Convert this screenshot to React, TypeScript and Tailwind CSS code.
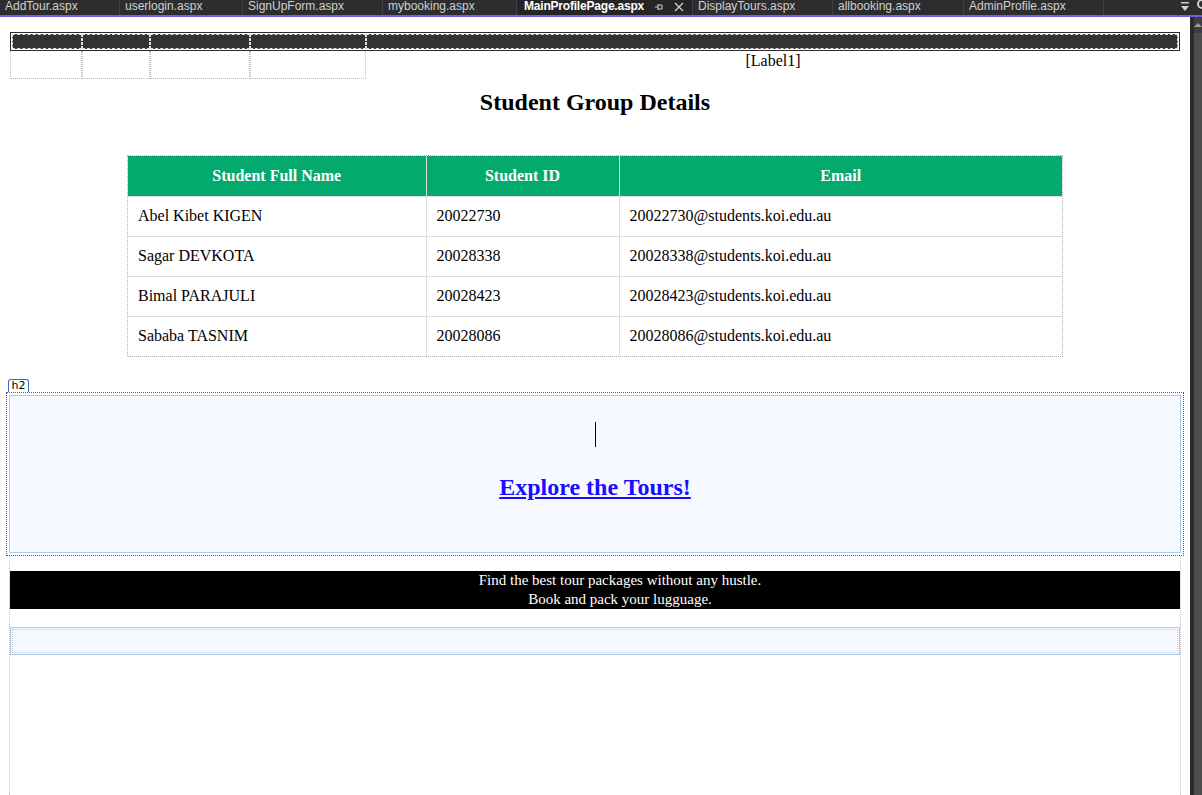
import React from "react";

const tabs = [
  { name: "AddTour.aspx", w: 120 },
  { name: "userlogin.aspx", w: 123 },
  { name: "SignUpForm.aspx", w: 140 },
  { name: "mybooking.aspx", w: 134 },
];
const tabs2 = [
  { name: "DisplayTours.aspx", w: 140 },
  { name: "allbooking.aspx", w: 131 },
  { name: "AdminProfile.aspx", w: 140 },
];

const rows = [
  ["Abel Kibet KIGEN", "20022730", "20022730@students.koi.edu.au"],
  ["Sagar DEVKOTA", "20028338", "20028338@students.koi.edu.au"],
  ["Bimal PARAJULI", "20028423", "20028423@students.koi.edu.au"],
  ["Sababa TASNIM", "20028086", "20028086@students.koi.edu.au"],
];

const navW = [72, 68, 100, 116];

export default function App() {
  return (
    <div className="w-[1202px] h-[795px] overflow-hidden flex flex-col bg-white">
      {/* tab bar */}
      <div className="h-[15px] bg-[#2d2d30] flex items-stretch text-[12px] leading-[14px] text-[#d0d0d0] overflow-hidden" style={{ fontFamily: '"Liberation Sans", Arial, sans-serif' }}>
        {tabs.map((t) => (
          <div key={t.name} className="shrink-0 border-r border-[#3f3f46] pl-[5px] -mt-[1px]" style={{ width: t.w }}>
            {t.name}
          </div>
        ))}
        <div className="shrink-0 w-[176px] border-r border-[#3f3f46] pl-[7px] -mt-[1px] flex items-start bg-[#252526]">
          <span className="font-bold text-white w-[130px] tracking-[-0.2px]">MainProfilePage.aspx</span>
          <svg width="10" height="10" viewBox="0 0 10 10" className="mt-[3px]">
            <path d="M1 5 H4 M4 2 V8 M4 3 H8 M4 7 H8 M8 3 V7" stroke="#cfcfcf" strokeWidth="1" fill="none" />
          </svg>
          <svg width="10" height="10" viewBox="0 0 10 10" className="mt-[3px] ml-[10px]">
            <path d="M1 1 L9 9 M9 1 L1 9" stroke="#cfcfcf" strokeWidth="1.3" />
          </svg>
        </div>
        {tabs2.map((t) => (
          <div key={t.name} className="shrink-0 border-r border-[#3f3f46] pl-[5px] -mt-[1px]" style={{ width: t.w }}>
            {t.name}
          </div>
        ))}
        <div className="flex-1 flex justify-end items-start gap-[6px]">
          <svg width="10" height="12" viewBox="0 0 10 12" className="mt-[1px]">
            <rect x="1" y="1" width="8" height="1.5" fill="#d0d0d0" />
            <path d="M1 5 L9 5 L5 10 Z" fill="#d0d0d0" />
          </svg>
          <svg width="6" height="12" viewBox="0 0 6 12">
            <circle cx="6" cy="4" r="4" fill="none" stroke="#d0d0d0" strokeWidth="2" />
          </svg>
        </div>
      </div>
      <div className="h-[2px] bg-[#7160e8]" />

      <div className="flex-1 flex min-h-0">
        {/* content */}
        <div className="w-[1190px] flex flex-col bg-white" style={{ fontFamily: '"Liberation Serif", "Times New Roman", serif' }}>
          {/* nav table */}
          <div className="mt-[15px] mx-[10px]">
            <div className="border border-[#2b2b2b] p-px flex h-[19px] bg-white">
              {navW.map((w, i) => (
                <div key={i} className="h-full bg-[#333333] border border-dashed border-[#e0e0e0]" style={{ width: w - (i === 0 ? 2 : 0) }} />
              ))}
              <div className="flex-1 h-full bg-[#333333] border border-dashed border-[#e0e0e0]" />
            </div>
            <div className="flex h-[28px]">
              {navW.map((w, i) => (
                <div key={i} className="h-full border border-dotted border-[#bdbdbd] border-t-0" style={{ width: w }} />
              ))}
              <div className="flex-1 text-center text-[16px] leading-[18px] pt-[1px] text-black">[Label1]</div>
            </div>
          </div>

          <h2 className="mt-[9px] text-center text-[24px] leading-[28px] font-bold text-black">Student Group Details</h2>

          {/* table */}
          <div className="mt-[39px] mx-auto w-[936px] border border-dotted border-[#b0b0b0]">
            <table className="w-full border-collapse text-[16px] text-black">
              <thead>
                <tr className="bg-[#04aa6d] text-white h-[40px]">
                  <th className="w-[298px] border-r border-[#dddddd] font-bold text-center">Student Full Name</th>
                  <th className="w-[193px] border-r border-[#dddddd] font-bold text-center">Student ID</th>
                  <th className="font-bold text-center">Email</th>
                </tr>
              </thead>
              <tbody>
                {rows.map((r) => (
                  <tr key={r[1]} className="h-[40px] border-t border-[#dddddd]">
                    <td className="pl-[10px] border-r border-[#dddddd]">{r[0]}</td>
                    <td className="pl-[10px] border-r border-[#dddddd]">{r[1]}</td>
                    <td className="pl-[10px]">{r[2]}</td>
                  </tr>
                ))}
              </tbody>
            </table>
          </div>

          {/* h2 tag */}
          <div className="mt-[22px] ml-[8px] w-[21px] h-[13px] border border-b-0 border-[#3a6bc5] rounded-t-[3px] bg-white text-[11px] leading-[12px] text-center text-black" style={{ fontFamily: '"DejaVu Sans", sans-serif' }}>
            h2
          </div>
          <div className="ml-[6px] w-[1178px] h-[164px] border border-dotted border-[#2f5fb8] p-[2px]">
            <div className="h-full border border-[#a9caf0] bg-[#f6f9ff] flex flex-col items-center">
              <div className="mt-[26px] w-px h-[25px] bg-black" />
              <a className="mt-[26px] text-[24px] leading-[28px] font-bold underline text-[#1a0dff]" href="#">
                Explore the Tours!
              </a>
            </div>
          </div>

          {/* form container */}
          <div className="ml-[9px] mr-[9px] flex-1 border-x border-dotted border-[#c0c0c0] flex flex-col">
            <div className="mt-[15px] h-[38px] bg-black text-white text-center text-[15px] leading-[19px] pl-[50px]">
              <div>Find the best tour packages without any hustle.</div>
              <div>Book and pack your lugguage.</div>
            </div>
            <div className="mt-[18px] h-[28px] border border-[#a9caf0] bg-[#f6f9ff] p-px">
              <div className="h-full border border-dotted border-[#c8c8c8]" />
            </div>
          </div>
        </div>

        {/* scrollbar */}
        <div className="w-[12px] flex">
          <div className="w-[4px] bg-[#2b2b2b]" />
          <div className="flex-1 bg-[#3e3e42] flex flex-col">
            <div className="h-[16px] flex items-center justify-center">
              <svg width="8" height="6" viewBox="0 0 8 6">
                <path d="M0 5 L4 1 L8 5 Z" fill="#9a9a9a" />
              </svg>
            </div>
            <div className="flex-1 bg-[#4d4d4d]" />
          </div>
        </div>
      </div>
    </div>
  );
}
